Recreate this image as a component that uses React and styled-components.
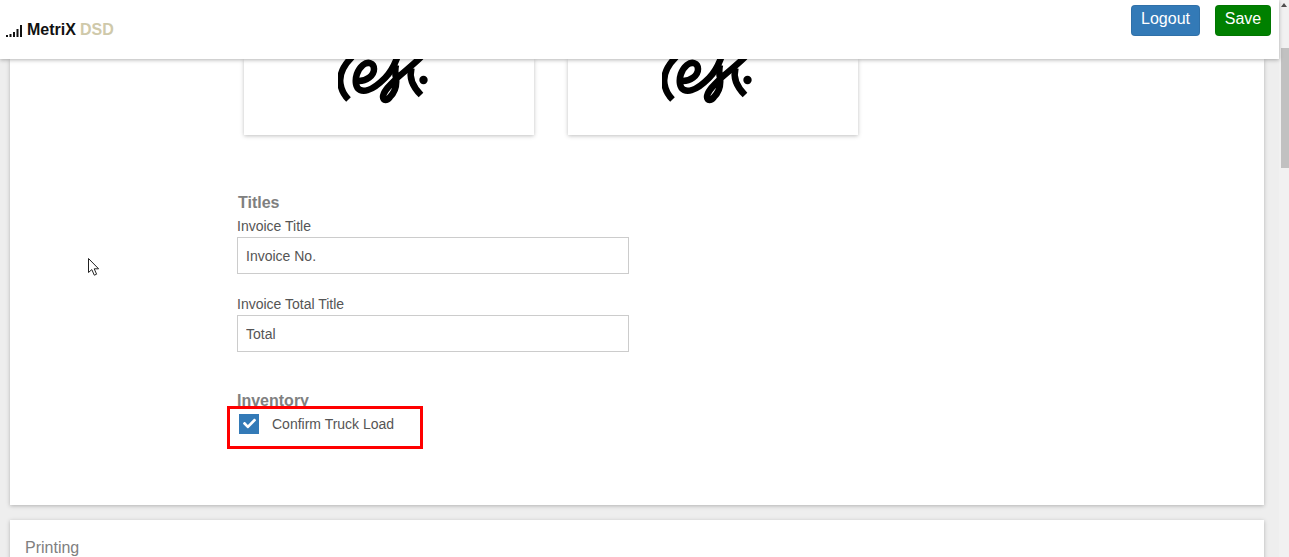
import React from "react";
import styled, { createGlobalStyle } from "styled-components";
import { FaCheck } from "react-icons/fa";

const GlobalStyle = createGlobalStyle`
  html, body {
    margin: 0;
    height: 100%;
    overflow: hidden;
    background: #eeeeee;
    font-family: "Liberation Sans", Arial, sans-serif;
    color: #555555;
  }
  * {
    box-sizing: border-box;
  }
`;

const LogoMark = () => (
  <LogoSvg width="90" height="46" viewBox="0 0 90 46">
    <g fill="none" stroke="#000" strokeWidth="6.5" strokeLinecap="butt">
      <path d="M14 -2 C6 6 1 16 2.5 25 C3.5 32 6 36 10.5 40.5" />
      <path d="M21 22 C28 22 36 17 36 10 C36 4 30 2 25 6 C19 11 17 19 18 25 C19 31 24 33 30 31 C37 29 42 24 47 19 C52 14 56 7 59 -1" />
      <path d="M58 6 C57 10 57 14 58 19 C59 27 56 34 52 38 C49 42 45 42 45 38 C45 33 50 28 56 22 C64 14 73 8 83 -2" />
      <path d="M73.5 9 C71 18 74 27 83 36" />
    </g>
    <circle cx="85.5" cy="21" r="4.2" fill="#000" />
  </LogoSvg>
);

const App = () => {
  return (
    <>
      <GlobalStyle />
      <Screen>
        <Column>
          <Header>
            <Brand>
              <SignalBars width="17" height="14" viewBox="0 0 17 14">
                <rect x="0" y="11" width="2" height="2" />
                <rect x="3.5" y="10" width="2" height="3" />
                <rect x="7" y="8" width="2" height="5" />
                <rect x="10.5" y="5" width="2" height="8" />
                <rect x="14" y="1" width="2" height="12" />
              </SignalBars>
              <BrandName>MetriX</BrandName>
              <BrandSuffix>DSD</BrandSuffix>
            </Brand>
            <HeaderActions>
              <ActionButton $bg="#337ab7" $width="69px">Logout</ActionButton>
              <ActionButton $bg="#008000" $width="56px">Save</ActionButton>
            </HeaderActions>
          </Header>
          <Scroller>
            <Card>
              <LogoRow>
                <LogoCard><LogoMark /></LogoCard>
                <LogoCard><LogoMark /></LogoCard>
              </LogoRow>
              <Form>
                <SectionTitle>Titles</SectionTitle>
                <Field>
                  <FieldLabel>Invoice Title</FieldLabel>
                  <TextInput defaultValue="Invoice No." />
                </Field>
                <Field>
                  <FieldLabel>Invoice Total Title</FieldLabel>
                  <TextInput defaultValue="Total" />
                </Field>
                <InventoryTitle>Inventory</InventoryTitle>
                <Highlight>
                  <CheckBox><FaCheck size={13} color="#fff" /></CheckBox>
                  <CheckLabel>Confirm Truck Load</CheckLabel>
                </Highlight>
              </Form>
            </Card>
            <PrintingCard>Printing</PrintingCard>
          </Scroller>
        </Column>
        <Scrollbar>
          <ScrollArrow />
          <ScrollThumb />
        </Scrollbar>
        <Pointer width="14" height="20" viewBox="0 0 14 20">
          <path
            d="M1.5 1.5 V15.5 L4.8 12.6 L7.3 18.2 L9.6 17.2 L7.2 11.8 H11.6 Z"
            fill="#fff"
            stroke="#222"
            strokeWidth="1"
          />
        </Pointer>
      </Screen>
    </>
  );
};

export default App;

const Screen = styled.div`
  position: relative;
  display: flex;
  width: 100%;
  height: 100vh;
  overflow: hidden;
`;

const Column = styled.div`
  flex: 1;
  min-width: 0;
  display: flex;
  flex-direction: column;
`;

const Header = styled.header`
  position: relative;
  z-index: 2;
  flex: none;
  height: 59px;
  display: flex;
  justify-content: space-between;
  background: #fff;
  box-shadow: 0 1px 4px rgba(0, 0, 0, 0.3);
  padding: 5px 8px 0 6px;
`;

const Brand = styled.div`
  display: flex;
  align-items: center;
  height: 49px;
  font-size: 16px;
  font-weight: bold;
`;

const SignalBars = styled.svg`
  fill: #111;
  margin-right: 4px;
  margin-top: 2px;
`;

const BrandName = styled.span`
  color: #111;
`;

const BrandSuffix = styled.span`
  color: #cfc9aa;
  margin-left: 4px;
`;

const HeaderActions = styled.div`
  display: flex;
  gap: 15px;
  align-items: flex-start;
`;

const ActionButton = styled.button`
  width: ${(p) => p.$width};
  height: 31px;
  padding: 0 0 3px;
  border: 1px solid rgba(0, 0, 0, 0.08);
  border-radius: 4px;
  background: ${(p) => p.$bg};
  color: #fff;
  font: 16px "Liberation Sans", Arial, sans-serif;
`;

const Scroller = styled.main`
  flex: 1;
  min-height: 0;
  overflow: hidden;
  padding: 0 15px 0 10px;
`;

const Card = styled.section`
  height: 446px;
  background: #fff;
  box-shadow: 0 1px 4px rgba(0, 0, 0, 0.25);
  padding-left: 227px;
`;

const LogoRow = styled.div`
  display: flex;
  gap: 34px;
  padding-left: 7px;
`;

const LogoCard = styled.div`
  width: 290px;
  height: 76px;
  background: #fff;
  box-shadow: 0 1px 4px rgba(0, 0, 0, 0.25);
  overflow: hidden;
  padding-left: 94px;
`;

const LogoSvg = styled.svg`
  display: block;
`;

const Form = styled.div`
  width: 392px;
  padding-top: 59px;
`;

const SectionTitle = styled.h4`
  margin: 0 0 6px 1px;
  font-size: 16px;
  line-height: 18px;
  font-weight: bold;
  color: #808080;
`;

const Field = styled.div`
  margin-bottom: 22px;
`;

const FieldLabel = styled.label`
  display: block;
  font-size: 14px;
  line-height: 16px;
  margin-bottom: 3px;
`;

const TextInput = styled.input`
  display: block;
  width: 100%;
  height: 37px;
  padding: 0 8px;
  border: 1px solid #cccccc;
  background: #fff;
  color: #555555;
  font: 14px "Liberation Sans", Arial, sans-serif;
  outline: none;
`;

const InventoryTitle = styled(SectionTitle)`
  margin: 0;
  padding-top: 18px;
`;

const Highlight = styled.div`
  position: relative;
  display: flex;
  align-items: center;
  width: 196px;
  height: 43px;
  margin: -4px 0 0 -10px;
  padding: 0 0 8px 9px;
  border: 3px solid #ff0000;
`;

const CheckBox = styled.span`
  flex: none;
  width: 20px;
  height: 20px;
  display: flex;
  align-items: center;
  justify-content: center;
  background: #337ab7;
`;

const CheckLabel = styled.span`
  margin-left: 13px;
  font-size: 14px;
`;

const PrintingCard = styled.section`
  margin-top: 15px;
  height: 60px;
  background: #fff;
  box-shadow: 0 1px 4px rgba(0, 0, 0, 0.25);
  padding: 19px 15px;
  font-size: 16px;
  line-height: 18px;
  color: #808080;
`;

const Scrollbar = styled.div`
  flex: none;
  width: 10px;
  background: #f1f1f1;
  padding-left: 2px;
`;

const ScrollArrow = styled.div`
  width: 0;
  height: 0;
  margin: 3px 0 41px 0;
  border-left: 3px solid transparent;
  border-right: 3px solid transparent;
  border-bottom: 4px solid #505050;
`;

const ScrollThumb = styled.div`
  width: 8px;
  height: 120px;
  background: #c1c1c1;
`;

const Pointer = styled.svg`
  position: absolute;
  left: 87px;
  top: 257px;
  z-index: 3;
`;
